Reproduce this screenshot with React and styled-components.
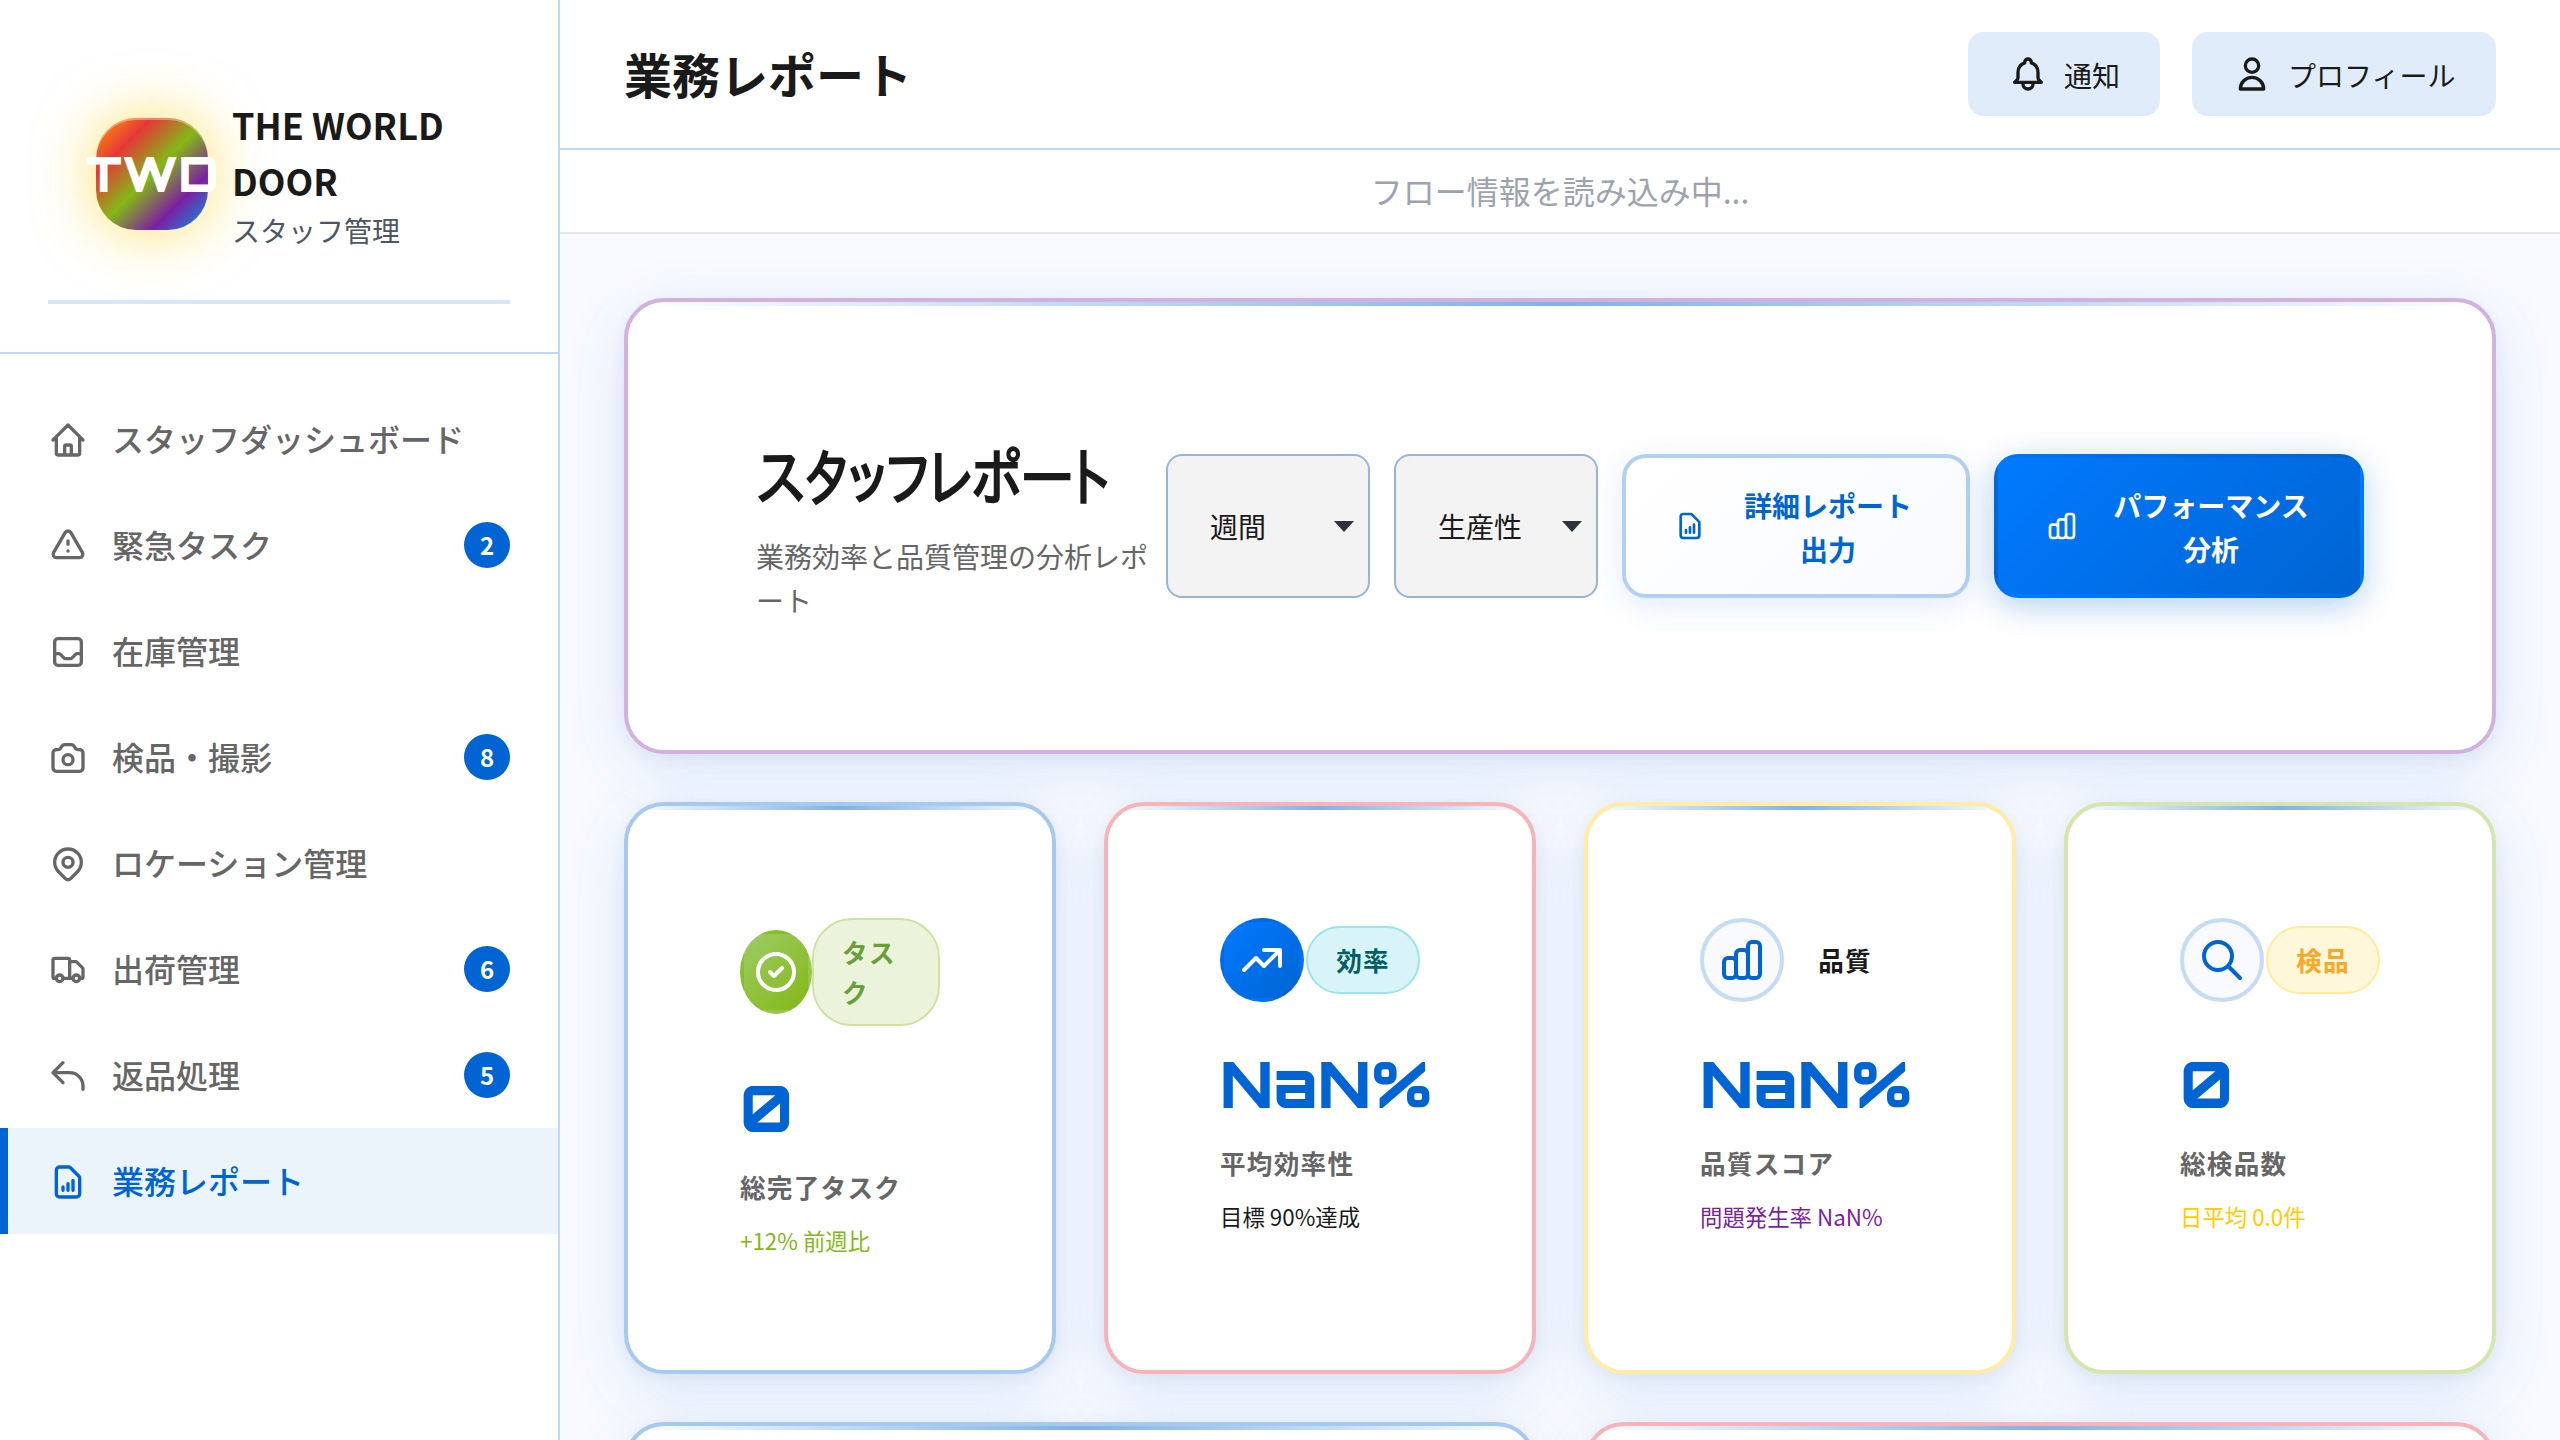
import React from "react";
import styled, { createGlobalStyle, css } from "styled-components";

const GlobalStyle = createGlobalStyle`
  *, *::before, *::after { box-sizing: border-box; }
  body {
    margin: 0;
    overflow: hidden;
    background: #f8faff;
    color: #1a1a1a;
    font-family: "Noto Sans CJK JP", "Noto Sans", sans-serif;
  }
  h1, h2, p { margin: 0; }
`;

const ICONS = {
  home: "M3 12l2-2m0 0l7-7 7 7M5 10v10a1 1 0 001 1h3m10-11l2 2m-2-2v10a1 1 0 01-1 1h-3m-6 0a1 1 0 001-1v-4a1 1 0 011-1h2a1 1 0 011 1v4a1 1 0 001 1m-6 0h6",
  alert: "M12 9v2m0 4h.01m-6.938 4h13.856c1.54 0 2.502-1.667 1.732-3L13.732 4c-.77-1.333-2.694-1.333-3.464 0L3.34 16c-.77 1.333.192 3 1.732 3z",
  inbox: "M20 13V6a2 2 0 00-2-2H6a2 2 0 00-2 2v7m16 0v5a2 2 0 01-2 2H6a2 2 0 01-2-2v-5m16 0h-2.586a1 1 0 00-.707.293l-2.414 2.414a1 1 0 01-.707.293h-3.172a1 1 0 01-.707-.293l-2.414-2.414A1 1 0 006.586 13H4",
  camera: "M3 9a2 2 0 012-2h.93a2 2 0 001.664-.89l.812-1.22A2 2 0 0110.07 4h3.86a2 2 0 011.664.89l.812 1.22A2 2 0 0018.07 7H19a2 2 0 012 2v9a2 2 0 01-2 2H5a2 2 0 01-2-2V9z M15 13a3 3 0 11-6 0 3 3 0 016 0z",
  pin: "M17.657 16.657L13.414 20.9a1.998 1.998 0 01-2.827 0l-4.244-4.243a8 8 0 1111.314 0z M15 11a3 3 0 11-6 0 3 3 0 016 0z",
  truck: "M13 16V6a1 1 0 00-1-1H4a1 1 0 00-1 1v10a1 1 0 001 1h1m8-1a1 1 0 01-1 1H9m4-1V8a1 1 0 011-1h2.586a1 1 0 01.707.293l3.414 3.414a1 1 0 01.293.707V16a1 1 0 01-1 1h-1m-6-1a1 1 0 001 1h1M5 17a2 2 0 104 0m-4 0a2 2 0 114 0m6 0a2 2 0 104 0m-4 0a2 2 0 114 0",
  reply: "M3 10h10a8 8 0 018 8v2M3 10l6 6m-6-6l6-6",
  report: "M9 17v-2m3 2v-4m3 4v-6m2 10H7a2 2 0 01-2-2V5a2 2 0 012-2h5.586a1 1 0 01.707.293l5.414 5.414a1 1 0 01.293.707V19a2 2 0 01-2 2z",
  bell: "M15 17h5l-1.405-1.405A2.032 2.032 0 0118 14.158V11a6.002 6.002 0 00-4-5.659V5a2 2 0 10-4 0v.341C7.67 6.165 6 8.388 6 11v3.159c0 .538-.214 1.055-.595 1.436L4 17h5m6 0v1a3 3 0 11-6 0v-1m6 0H9",
  user: "M16 7a4 4 0 11-8 0 4 4 0 018 0zM12 14a7 7 0 00-7 7h14a7 7 0 00-7-7z",
  check: "M9 12l2 2 4-4m6 2a9 9 0 11-18 0 9 9 0 0118 0z",
  trend: "M13 7h8m0 0v8m0-8l-8 8-4-4-6 6",
  bars: "M9 19v-6a2 2 0 00-2-2H5a2 2 0 00-2 2v6a2 2 0 002 2h2a2 2 0 002-2zm0 0V9a2 2 0 012-2h2a2 2 0 012 2v10m-6 0a2 2 0 002 2h2a2 2 0 002-2m0 0V5a2 2 0 012-2h2a2 2 0 012 2v14a2 2 0 01-2 2h-2a2 2 0 01-2-2z",
  search: "M21 21l-6-6m2-5a7 7 0 11-14 0 7 7 0 0114 0z",
};

const Svg = styled.svg`
  width: ${(p) => p.$size}px;
  height: ${(p) => p.$size}px;
  flex: none;
  fill: none;
  stroke: currentColor;
  stroke-width: 2;
  stroke-linecap: round;
  stroke-linejoin: round;
`;
const Icon = ({ name, size = 40 }) => (
  <Svg $size={size} viewBox="0 0 24 24">
    <path d={ICONS[name]} />
  </Svg>
);

const Shell = styled.div`
  display: flex;
  height: 1440px;
  width: 2560px;
  overflow: hidden;
`;

/* Sidebar */
const Sidebar = styled.aside`
  width: 560px;
  flex: none;
  background: #fff;
  border-right: 2px solid #bfd8f4;
`;
const SidebarHead = styled.div`
  padding: 48px;
  height: 354px;
  border-bottom: 2px solid #bfd8f4;
`;
const Brand = styled.div`
  display: flex;
  align-items: center;
  gap: 24px;
  height: 256px;
  padding: 0 48px;
  border-bottom: 4px solid #d6e7f8;
`;
const Logo = styled.div`
  width: 112px;
  height: 112px;
  flex: none;
  display: flex;
  align-items: center;
  justify-content: center;
  border-radius: 40px;
  background: linear-gradient(135deg, #ff9f0a 0%, #e53935 25%, #84b816 50%, #7b1fa2 75%, #00a0e9 100%);
  box-shadow: 0 0 60px rgba(255, 204, 0, 0.6), inset 0 2px 0 rgba(255, 255, 255, 0.35);
  color: #fff;
  font-family: Orbitron, "DejaVu Sans", sans-serif;
  font-weight: 900;
  font-size: 48px;
  line-height: 1;
`;
const BrandText = styled.div`
  flex: 1;
  min-width: 0;
  padding-bottom: 2px;
`;
const BrandName = styled.h2`
  font-size: 36px;
  line-height: 56px;
  font-weight: 700;
`;
const BrandSub = styled.p`
  margin-top: 2px;
  font-size: 28px;
  line-height: 40px;
  color: #4b5563;
`;
const Nav = styled.nav`
  padding-top: 32px;
`;
const NavItem = styled.div`
  display: flex;
  align-items: center;
  gap: 24px;
  height: 106px;
  padding: 0 48px 0 40px;
  border-left: 8px solid ${(p) => (p.$active ? "#0064d2" : "transparent")};
  background: ${(p) => (p.$active ? "#ebf3fb" : "transparent")};
  color: ${(p) => (p.$active ? "#0064d2" : "#666")};
  font-size: 32px;
  font-weight: 500;
  white-space: nowrap;
  & > svg {
    margin-top: 2px;
  }
`;
const NavLabel = styled.span`
  flex: 1;
  padding-bottom: 2px;
`;
const Count = styled.span`
  width: 46px;
  height: 46px;
  border-radius: 50%;
  background: #0064d2;
  color: #fff;
  font-size: 24px;
  font-weight: 700;
  line-height: 46px;
  text-align: center;
`;

/* Top area */
const Main = styled.main`
  flex: 1;
  min-width: 0;
  display: flex;
  flex-direction: column;
`;
const TopBar = styled.header`
  flex: none;
  display: flex;
  align-items: center;
  justify-content: space-between;
  height: 150px;
  padding: 0 64px;
  background: #fff;
  border-bottom: 2px solid #bfd8f4;
`;
const PageTitle = styled.h1`
  padding-bottom: 2px;
  font-size: 48px;
  font-weight: 700;
  line-height: 72px;
`;
const TopActions = styled.div`
  display: flex;
  gap: 32px;
`;
const TopButton = styled.button`
  display: flex;
  align-items: center;
  gap: 16px;
  width: ${(p) => p.$w}px;
  height: 84px;
  padding: 0 0 0 40px;
  border: 0;
  border-radius: 16px;
  background: #e0ecfa;
  color: #1a1a1a;
  font: inherit;
  font-size: 28px;
  white-space: nowrap;
`;
const TopLabel = styled.span`
  padding-top: 2px;
`;
const FlowBar = styled.div`
  flex: none;
  height: 84px;
  border-bottom: 2px solid #e5e7eb;
  background: #fff;
  color: #9ca3af;
  font-size: 32px;
  line-height: 80px;
  text-align: center;
`;
const Content = styled.div`
  display: flex;
  flex-direction: column;
  gap: 48px;
  padding: 64px;
`;

/* Cards */
const Card = styled.section`
  position: relative;
  flex: none;
  border: 4px solid ${(p) => p.$edge};
  border-radius: 40px;
  background: #fff;
  box-shadow: 0 16px 64px rgba(0, 100, 210, 0.12), 0 4px 16px rgba(0, 0, 0, 0.05);
  overflow: hidden;
  &::before {
    content: "";
    position: absolute;
    inset: 0 0 auto 0;
    height: 4px;
    background: linear-gradient(90deg, transparent, #0064d2, transparent);
    opacity: 0.5;
  }
`;
const HeroCard = styled(Card)`
  display: flex;
  align-items: center;
  justify-content: space-between;
  height: 456px;
  padding: 0 128px;
`;
const HeroText = styled.div`
  width: 400px;
`;
const HeroTitle = styled.h2`
  width: max-content;
  padding-top: 2px;
  font-family: IPAPGothic, "Noto Sans CJK JP", sans-serif;
  font-size: 64px;
  font-weight: 700;
  line-height: 96px;
  letter-spacing: -1.28px;
  transform: scaleX(0.855);
  transform-origin: 0 50%;
`;
const HeroSub = styled.p`
  width: 400px;
  margin: 9px 0 3px;
  font-size: 28px;
  line-height: 44px;
  color: #666;
`;
const HeroActions = styled.div`
  display: flex;
  gap: 24px;
  height: 144px;
`;
const SelectBox = styled.div`
  width: 204px;
  display: flex;
  align-items: center;
  justify-content: space-between;
  padding: 0 14px 0 42px;
  border: 2px solid #98b5d6;
  border-radius: 16px;
  background: #f3f3f3;
  font-size: 28px;
`;
const Caret = styled.i`
  border: 10px solid transparent;
  border-top: 11px solid #2d3338;
  border-bottom: 0;
`;
const ActionButton = styled.button`
  display: flex;
  align-items: center;
  gap: 32px;
  width: ${(p) => p.$w}px;
  padding: 0 48px;
  border-radius: 24px;
  font: inherit;
  font-size: 28px;
  font-weight: 700;
  line-height: 44px;
  text-align: center;
  ${(p) =>
    p.$primary
      ? css`
          border: 4px solid transparent;
          background: linear-gradient(135deg, #007aff 0%, #0064d2 100%);
          box-shadow: 0 8px 32px rgba(0, 100, 210, 0.3);
          color: #fff;
        `
      : css`
          border: 4px solid #b2d0f2;
          background: linear-gradient(135deg, #fff 0%, #f8faff 100%);
          box-shadow: 0 8px 32px rgba(0, 100, 210, 0.12);
          color: #0064d2;
        `}
`;
const ActionLabel = styled.span`
  flex: 1;
  padding-top: 1px;
`;

const StatGrid = styled.div`
  display: grid;
  grid-template-columns: repeat(4, 1fr);
  gap: 48px;
  flex: none;
`;
const StatCard = styled(Card)`
  height: 572px;
  padding: 112px;
`;
const StatHead = styled.div`
  display: flex;
  align-items: center;
  justify-content: space-between;
  margin-bottom: 31px;
`;
const DISC = {
  green: css`
    border-color: transparent;
    background: linear-gradient(135deg, #9ccc65, #84b816);
    color: #fff;
  `,
  blue: css`
    border-color: transparent;
    background: linear-gradient(135deg, #007aff, #0064d2);
    color: #fff;
  `,
  plain: css`
    border-color: #c6dcf6;
    background: #f8faff;
    color: #0064d2;
  `,
};
const Disc = styled.div`
  display: flex;
  align-items: center;
  justify-content: center;
  flex: none;
  width: ${(p) => (p.$narrow ? 72 : 84)}px;
  height: 84px;
  border: 4px solid;
  border-radius: 50%;
  ${(p) => DISC[p.$kind]}
`;
const TAG = {
  green: css`
    background: #ebf4db;
    border: 2px solid #cee3a2;
    color: #689f38;
  `,
  cyan: css`
    background: #d9f4f8;
    border: 2px solid #99e5ee;
    color: #006064;
  `,
  amber: css`
    background: #fff7d9;
    border: 2px solid #ffeb99;
    color: #f9a825;
  `,
  none: "",
};
const Tag = styled.span`
  padding: 12px 28px;
  border-radius: 40px;
  font-size: 25.6px;
  line-height: 40px;
  letter-spacing: 1.3px;
  font-weight: 700;
  ${(p) => p.$wrap && "width: 128px;"}
  ${(p) => TAG[p.$kind]}
`;
const Value = styled.div`
  height: 102px;
  line-height: 102px;
  font-family: Orbitron, "DejaVu Sans", sans-serif;
  font-size: 64px;
  font-weight: 800;
  color: #0064d2;
  white-space: nowrap;
`;
const StatLabel = styled.div`
  margin-top: 7px;
  font-size: 25.6px;
  line-height: 42px;
  letter-spacing: 1.28px;
  font-weight: 700;
  color: #666;
`;
const StatNote = styled.div`
  margin-top: 14px;
  font-size: 22.4px;
  line-height: 36px;
  color: ${(p) => p.$color};
`;
const PanelGrid = styled.div`
  display: grid;
  grid-template-columns: repeat(2, 1fr);
  gap: 48px;
  flex: none;
`;
const Panel = styled(Card)`
  height: 600px;
`;

const EDGE = {
  blue: "#a6c9ef",
  red: "#f6b4b8",
  yellow: "#ffeda6",
  green: "#d4e6ad",
  purple: "#d1b1de",
};

const NAV = [
  ["home", "スタッフダッシュボード"],
  ["alert", "緊急タスク", 2],
  ["inbox", "在庫管理"],
  ["camera", "検品・撮影", 8],
  ["pin", "ロケーション管理"],
  ["truck", "出荷管理", 6],
  ["reply", "返品処理", 5],
  ["report", "業務レポート"],
];

const STATS = [
  { edge: "blue", disc: "green", icon: "check", tag: "タスク", tagKind: "green", wrap: true, value: "0", label: "総完了タスク", note: "+12% 前週比", color: "#84b816" },
  { edge: "red", disc: "blue", icon: "trend", tag: "効率", tagKind: "cyan", value: "NaN%", label: "平均効率性", note: "目標 90%達成", color: "#1a1a1a" },
  { edge: "yellow", disc: "plain", icon: "bars", tag: "品質", tagKind: "none", value: "NaN%", label: "品質スコア", note: "問題発生率 NaN%", color: "#7b1fa2" },
  { edge: "green", disc: "plain", icon: "search", tag: "検品", tagKind: "amber", value: "0", label: "総検品数", note: "日平均 0.0件", color: "#ffcc00" },
];

export default function App() {
  return (
    <Shell>
      <GlobalStyle />
      <Sidebar>
        <SidebarHead>
          <Brand>
            <Logo>TWD</Logo>
            <BrandText>
              <BrandName>THE WORLD DOOR</BrandName>
              <BrandSub>スタッフ管理</BrandSub>
            </BrandText>
          </Brand>
        </SidebarHead>
        <Nav>
          {NAV.map(([icon, label, count]) => (
            <NavItem key={label} $active={icon === "report"}>
              <Icon name={icon} />
              <NavLabel>{label}</NavLabel>
              {count && <Count>{count}</Count>}
            </NavItem>
          ))}
        </Nav>
      </Sidebar>
      <Main>
        <TopBar>
          <PageTitle>業務レポート</PageTitle>
          <TopActions>
            <TopButton $w={192}>
              <Icon name="bell" />
              <TopLabel>通知</TopLabel>
            </TopButton>
            <TopButton $w={304}>
              <Icon name="user" />
              <TopLabel>プロフィール</TopLabel>
            </TopButton>
          </TopActions>
        </TopBar>
        <FlowBar>フロー情報を読み込み中...</FlowBar>
        <Content>
          <HeroCard $edge={EDGE.purple}>
            <HeroText>
              <HeroTitle>スタッフレポート</HeroTitle>
              <HeroSub>業務効率と品質管理の分析レポート</HeroSub>
            </HeroText>
            <HeroActions>
              <SelectBox>
                週間
                <Caret />
              </SelectBox>
              <SelectBox>
                生産性
                <Caret />
              </SelectBox>
              <ActionButton $w={348}>
                <Icon name="report" size={32} />
                <ActionLabel>詳細レポート出力</ActionLabel>
              </ActionButton>
              <ActionButton $w={370} $primary>
                <Icon name="bars" size={32} />
                <ActionLabel>パフォーマンス分析</ActionLabel>
              </ActionButton>
            </HeroActions>
          </HeroCard>
          <StatGrid>
            {STATS.map((s) => (
              <StatCard key={s.label} $edge={EDGE[s.edge]}>
                <StatHead>
                  <Disc $kind={s.disc} $narrow={s.wrap}>
                    <Icon name={s.icon} size={48} />
                  </Disc>
                  <Tag $kind={s.tagKind} $wrap={s.wrap}>
                    {s.tag}
                  </Tag>
                </StatHead>
                <Value>{s.value}</Value>
                <StatLabel>{s.label}</StatLabel>
                <StatNote $color={s.color}>{s.note}</StatNote>
              </StatCard>
            ))}
          </StatGrid>
          <PanelGrid>
            <Panel $edge={EDGE.blue} />
            <Panel $edge={EDGE.red} />
          </PanelGrid>
        </Content>
      </Main>
    </Shell>
  );
}
